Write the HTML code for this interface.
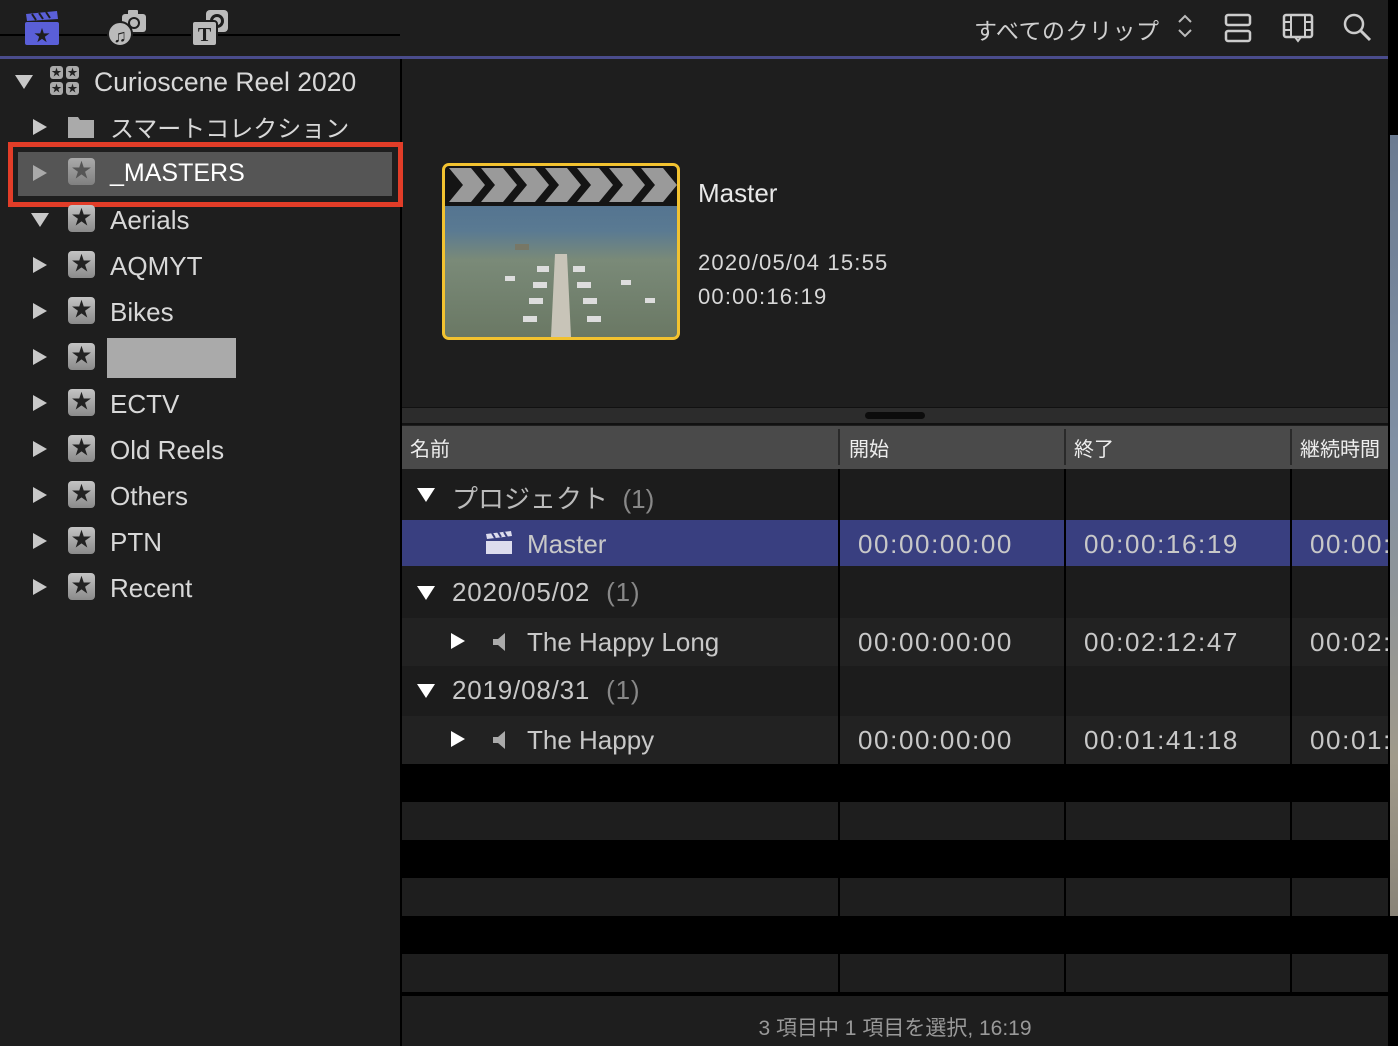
<!DOCTYPE html>
<html><head><meta charset="utf-8"><style>
*{margin:0;padding:0;box-sizing:border-box}
body{width:1398px;height:1046px;background:#1e1e1e;position:relative;overflow:hidden;font-family:"Liberation Sans","Noto Sans CJK JP",sans-serif;color:#d8d8d8}
.a{position:absolute}
.t{font-size:26px;white-space:nowrap;letter-spacing:0}
.tri{position:absolute;width:0;height:0}
.tr{border-top:8px solid transparent;border-bottom:8px solid transparent;border-left:14px solid #c8c8c8}
.td{border-left:9px solid transparent;border-right:9px solid transparent;border-top:14px solid #c8c8c8}
.star{position:absolute;width:27px;height:27px;border-radius:4px;background:linear-gradient(#c4c4c4,#8a8a8a);color:#222;font-size:20px;line-height:27px;text-align:center}
.row{position:absolute;left:402px;width:986px}
.tc{position:absolute;font-size:26px;color:#c8c8c8;white-space:nowrap}
.tm{letter-spacing:1.6px}
</style></head><body>
<div class="a" style="left:0;top:34px;width:400px;height:2px;background:#000"></div>
<div class="a" style="left:0;top:56px;width:1388px;height:3px;background:#4a4c8c"></div>
<svg class="a" style="left:24px;top:10px" width="36" height="36" viewBox="0 0 36 36"><rect x="1" y="12" width="34" height="23" rx="2" fill="#5a5fd8"/><path d="M2 4 L33 1 L34 9 L3 11Z" fill="#5a5fd8"/><path d="M8 4l4 6M15 3l4 6M22 2l4 6" stroke="#1e1e1e" stroke-width="2"/><text x="18" y="31" font-size="16" text-anchor="middle" fill="#1e1e1e">★</text></svg>
<svg class="a" style="left:106px;top:8px" width="42" height="40" viewBox="0 0 42 40"><rect x="16" y="6" width="24" height="18" rx="3" fill="#bbb"/><rect x="22" y="2" width="10" height="6" rx="1" fill="#bbb"/><circle cx="28" cy="15" r="6" fill="#1e1e1e"/><circle cx="28" cy="15" r="4" fill="#bbb"/><circle cx="14" cy="26" r="12" fill="#bbb" stroke="#1e1e1e" stroke-width="2"/><text x="14" y="34" font-size="18" text-anchor="middle" fill="#1e1e1e">♫</text></svg>
<svg class="a" style="left:190px;top:8px" width="42" height="40" viewBox="0 0 42 40"><rect x="16" y="2" width="22" height="22" rx="4" fill="#bbb"/><circle cx="27" cy="13" r="7" fill="#1e1e1e"/><circle cx="27" cy="13" r="4" fill="#bbb"/><rect x="2" y="13" width="25" height="25" rx="3" fill="#bbb" stroke="#1e1e1e" stroke-width="2"/><text x="14.5" y="33" font-size="20" font-family="Liberation Serif" font-weight="bold" text-anchor="middle" fill="#1e1e1e">T</text></svg>
<div class="a t" style="left:974px;top:12px;font-size:23px;color:#cfcfcf;letter-spacing:0.5px">すべてのクリップ</div>
<svg class="a" style="left:1176px;top:13px" width="18" height="26"><path d="M3 9l6-6 6 6M3 17l6 6 6-6" stroke="#bbb" stroke-width="2" fill="none"/></svg>
<svg class="a" style="left:1224px;top:13px" width="28" height="30"><rect x="2" y="2" width="24" height="10" rx="2" stroke="#ccc" stroke-width="2.5" fill="none"/><rect x="2" y="18" width="24" height="10" rx="2" stroke="#ccc" stroke-width="2.5" fill="none"/></svg>
<svg class="a" style="left:1282px;top:13px" width="32" height="30"><rect x="2" y="2" width="28" height="22" rx="2" stroke="#ccc" stroke-width="2.5" fill="none"/><path d="M9 2v22M23 2v22M2 9h7M2 17h7M23 9h7M23 17h7M13 24l3 4 3-4" stroke="#ccc" stroke-width="2" fill="none"/></svg>
<svg class="a" style="left:1342px;top:12px" width="32" height="32"><circle cx="12" cy="12" r="9" stroke="#ccc" stroke-width="2.5" fill="none"/><path d="M19 19l9 9" stroke="#ccc" stroke-width="3"/></svg>
<div class="a" style="left:400px;top:59px;width:2px;height:987px;background:#000"></div>
<div class="a" style="left:1388px;top:0;width:10px;height:1046px;background:#000"></div>
<div class="a" style="left:1390px;top:135px;width:8px;height:781px;background:linear-gradient(#6a7a90,#8090a4 40%,#a09a8a 80%,#8a8478)"></div>
<!-- sidebar -->
<div class="tri td" style="left:15px;top:75px"></div>
<svg class="a" style="left:50px;top:66px" width="30" height="30"><rect x="0" y="0" width="13" height="13" rx="3" fill="#aaa"/><rect x="16" y="0" width="13" height="13" rx="3" fill="#aaa"/><rect x="0" y="16" width="13" height="13" rx="3" fill="#aaa"/><rect x="16" y="16" width="13" height="13" rx="3" fill="#aaa"/><g font-size="10" fill="#222" text-anchor="middle"><text x="6.5" y="10">★</text><text x="22.5" y="10">★</text><text x="6.5" y="26">★</text><text x="22.5" y="26">★</text></g></svg>
<div class="a t" style="left:94px;top:67px;font-size:26.5px">Curioscene Reel 2020</div>
<div class="tri tr" style="left:33px;top:119px"></div>
<svg class="a" style="left:68px;top:115px" width="28" height="24"><path d="M0 2h10l2 3h14v18H0z" fill="#aaa"/></svg>
<div class="a t" style="left:110px;top:109px;font-size:24px">スマートコレクション</div>
<div class="a" style="left:18px;top:152px;width:374px;height:44px;background:#555"></div>
<div class="a" style="left:8px;top:142px;width:395px;height:65px;border:5px solid #e23d28"></div>
<div class="tri tr" style="left:33px;top:165px;border-left-color:#aaa"></div>
<div class="star" style="left:68px;top:158px;background:linear-gradient(#aaa,#808080);color:#555">★</div>
<div class="a t" style="left:110px;top:159px;color:#fff;font-size:25px">_MASTERS</div>
<div class="tri td" style="left:31px;top:213px"></div>
<div class="star" style="left:68px;top:205px">★</div><div class="a t" style="left:110px;top:205px">Aerials</div>
<div class="tri tr" style="left:33px;top:257px"></div><div class="star" style="left:68px;top:251px">★</div><div class="a t" style="left:110px;top:251px">AQMYT</div>
<div class="tri tr" style="left:33px;top:303px"></div><div class="star" style="left:68px;top:297px">★</div><div class="a t" style="left:110px;top:297px">Bikes</div>
<div class="tri tr" style="left:33px;top:349px"></div><div class="star" style="left:68px;top:343px">★</div><div class="a" style="left:107px;top:338px;width:129px;height:40px;background:#aaa"></div>
<div class="tri tr" style="left:33px;top:395px"></div><div class="star" style="left:68px;top:389px">★</div><div class="a t" style="left:110px;top:389px">ECTV</div>
<div class="tri tr" style="left:33px;top:441px"></div><div class="star" style="left:68px;top:435px">★</div><div class="a t" style="left:110px;top:435px">Old Reels</div>
<div class="tri tr" style="left:33px;top:487px"></div><div class="star" style="left:68px;top:481px">★</div><div class="a t" style="left:110px;top:481px">Others</div>
<div class="tri tr" style="left:33px;top:533px"></div><div class="star" style="left:68px;top:527px">★</div><div class="a t" style="left:110px;top:527px">PTN</div>
<div class="tri tr" style="left:33px;top:579px"></div><div class="star" style="left:68px;top:573px">★</div><div class="a t" style="left:110px;top:573px">Recent</div>
<!-- thumbnail -->
<div class="a" style="left:442px;top:163px;width:238px;height:177px;border:3px solid #f2c230;border-radius:7px;overflow:hidden;background:linear-gradient(#b8c0c8 0,#b8c0c8 6%,#4f6f8f 10%,#5a7a92 38%,#7a8a78 55%,#6a7864 100%)">
<svg width="232" height="40" style="display:block;background:#141414"><g fill="#9a9a9a"><path d="M4 2h22l14 17-14 17H4l14-17z"/><path d="M36 2h22l14 17-14 17H36l14-17z"/><path d="M68 2h22l14 17-14 17H68l14-17z"/><path d="M100 2h22l14 17-14 17h-22l14-17z"/><path d="M132 2h22l14 17-14 17h-22l14-17z"/><path d="M164 2h22l14 17-14 17h-22l14-17z"/><path d="M196 2h22l14 17-14 17h-22l14-17z"/></g></svg>
<svg class="a" style="left:0;top:40px" width="232" height="131"><path d="M110 48h12l4 83h-20z" fill="#c8c4b8"/><g fill="#ddd"><rect x="92" y="60" width="12" height="6"/><rect x="88" y="76" width="14" height="6"/><rect x="84" y="92" width="14" height="6"/><rect x="78" y="110" width="14" height="6"/><rect x="128" y="60" width="12" height="6"/><rect x="132" y="76" width="14" height="6"/><rect x="138" y="92" width="14" height="6"/><rect x="142" y="110" width="14" height="6"/><rect x="60" y="70" width="10" height="5"/><rect x="176" y="74" width="10" height="5"/><rect x="200" y="92" width="10" height="5"/></g><rect x="70" y="38" width="14" height="6" fill="#776"/></svg>
</div>
<div class="a t" style="left:698px;top:178px;font-size:26px;color:#e8e8e8">Master</div>
<div class="a t" style="left:698px;top:250px;font-size:22px;letter-spacing:1.2px">2020/05/04 15:55</div>
<div class="a t" style="left:698px;top:284px;font-size:22px;letter-spacing:1.2px">00:00:16:19</div>
<div class="a" style="left:402px;top:407px;width:986px;height:18px;background:#2c2c2c;border-top:1px solid #111;border-bottom:2px solid #111"></div>
<div class="a" style="left:865px;top:412px;width:60px;height:7px;border-radius:4px;background:#0c0c0c"></div>
<div class="row" style="top:426px;height:43px;background:#4a4a4a">
<div class="a t" style="left:8px;top:7px;font-size:20px;color:#eee">名前</div>
<div class="a" style="left:436px;top:3px;width:2px;height:36px;background:#2a2a2a"></div>
<div class="a t" style="left:447px;top:7px;font-size:20px;color:#eee">開始</div>
<div class="a" style="left:662px;top:3px;width:2px;height:36px;background:#2a2a2a"></div>
<div class="a t" style="left:672px;top:7px;font-size:20px;color:#eee">終了</div>
<div class="a" style="left:888px;top:3px;width:2px;height:36px;background:#2a2a2a"></div>
<div class="a t" style="left:898px;top:7px;font-size:20px;color:#eee">継続時間</div>
</div>
<div class="row" style="top:469px;height:295px;background:#1c1c1c"></div>
<div class="a" style="left:838px;top:469px;width:2px;height:295px;background:#000"></div>
<div class="a" style="left:1064px;top:469px;width:2px;height:295px;background:#000"></div>
<div class="a" style="left:1290px;top:469px;width:2px;height:295px;background:#000"></div>
<div class="tri td" style="left:417px;top:488px;border-top-color:#fff"></div>
<div class="tc" style="left:452px;top:479px;color:#bbb">プロジェクト <span style="color:#888">&nbsp;(1)</span></div>
<div class="row" style="top:520px;height:46px;background:#393f80"></div>
<div class="a" style="left:838px;top:520px;width:2px;height:46px;background:#000"></div>
<div class="a" style="left:1064px;top:520px;width:2px;height:46px;background:#000"></div>
<div class="a" style="left:1290px;top:520px;width:2px;height:46px;background:#000"></div>
<svg class="a" style="left:485px;top:531px" width="28" height="24"><path d="M1 3l25-3 1 5-25 3z" fill="#dde"/><rect x="1" y="10" width="26" height="13" fill="#dde"/><path d="M7 2l3 5M13 1l3 5M19 1l3 5" stroke="#393f80" stroke-width="2"/></svg>
<div class="tc" style="left:527px;top:529px">Master</div>
<div class="tc tm" style="left:858px;top:529px">00:00:00:00</div>
<div class="tc tm" style="left:1084px;top:529px">00:00:16:19</div>
<div class="tc tm" style="left:1310px;top:529px;width:78px;overflow:hidden">00:00:16:19</div>
<div class="tri td" style="left:417px;top:586px;border-top-color:#fff"></div>
<div class="tc" style="left:452px;top:577px;letter-spacing:0.8px">2020/05/02 <span style="color:#888">&nbsp;(1)</span></div>
<div class="row" style="top:618px;height:48px;background:#222"></div>
<div class="tri tr" style="left:451px;top:633px;border-left-color:#fff"></div>
<svg class="a" style="left:491px;top:632px" width="16" height="20"><path d="M2 7h5l7-6v18l-7-6H2z" fill="#aaa"/></svg>
<div class="tc" style="left:527px;top:627px">The Happy Long</div>
<div class="tc tm" style="left:858px;top:627px">00:00:00:00</div>
<div class="tc tm" style="left:1084px;top:627px">00:02:12:47</div>
<div class="tc tm" style="left:1310px;top:627px;width:78px;overflow:hidden">00:02:12:47</div>
<div class="tri td" style="left:417px;top:684px;border-top-color:#fff"></div>
<div class="tc" style="left:452px;top:675px;letter-spacing:0.8px">2019/08/31 <span style="color:#888">&nbsp;(1)</span></div>
<div class="row" style="top:716px;height:48px;background:#222"></div>
<div class="tri tr" style="left:451px;top:731px;border-left-color:#fff"></div>
<svg class="a" style="left:491px;top:730px" width="16" height="20"><path d="M2 7h5l7-6v18l-7-6H2z" fill="#aaa"/></svg>
<div class="tc" style="left:527px;top:725px">The Happy</div>
<div class="tc tm" style="left:858px;top:725px">00:00:00:00</div>
<div class="tc tm" style="left:1084px;top:725px">00:01:41:18</div>
<div class="tc tm" style="left:1310px;top:725px;width:78px;overflow:hidden">00:01:41:18</div>
<div class="a" style="left:838px;top:566px;width:2px;height:198px;background:#000"></div>
<div class="a" style="left:1064px;top:566px;width:2px;height:198px;background:#000"></div>
<div class="a" style="left:1290px;top:566px;width:2px;height:198px;background:#000"></div>
<div class="row" style="top:764px;height:232px;background:#000"></div>
<div class="row" style="top:802px;height:38px;background:#1e1e1e"></div>
<div class="row" style="top:878px;height:38px;background:#1e1e1e"></div>
<div class="row" style="top:954px;height:38px;background:#1e1e1e"></div>
<div class="a" style="left:838px;top:802px;width:2px;height:190px;background:#000"></div>
<div class="a" style="left:1064px;top:802px;width:2px;height:190px;background:#000"></div>
<div class="a" style="left:1290px;top:802px;width:2px;height:190px;background:#000"></div>
<div class="row" style="top:996px;height:50px;background:#1e1e1e"></div>
<div class="a t" style="left:402px;width:986px;top:1012px;font-size:21px;color:#999;text-align:center">3 項目中 1 項目を選択, 16:19</div>
</body></html>
